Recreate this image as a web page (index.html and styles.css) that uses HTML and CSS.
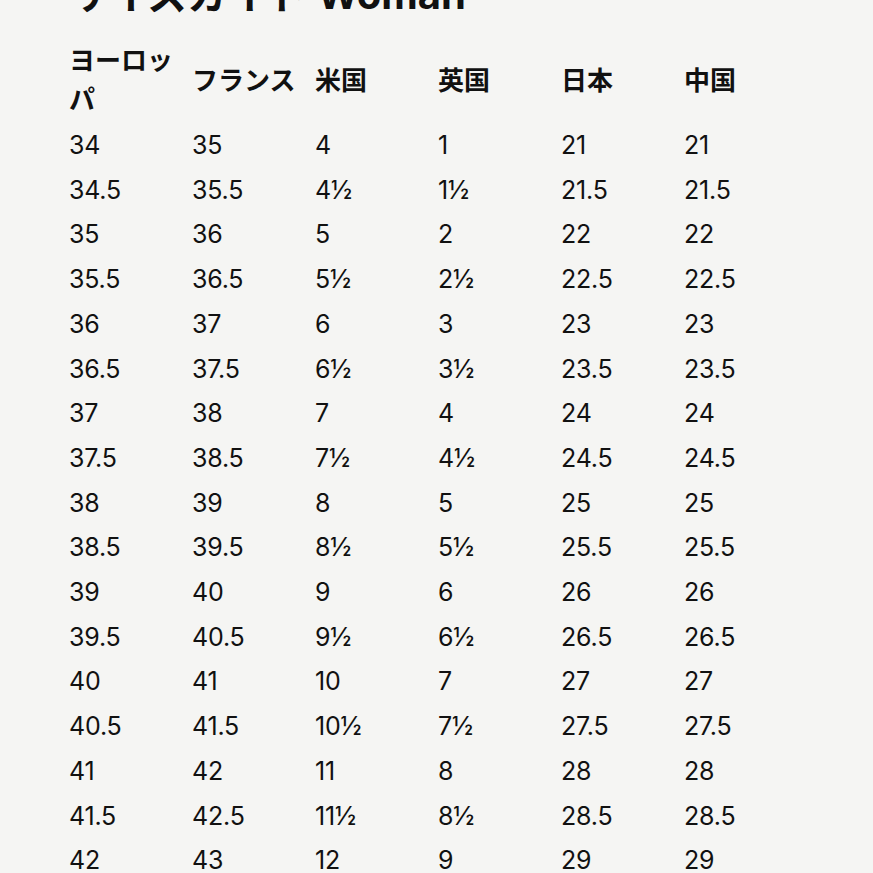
FILE: index.html
```html
<!DOCTYPE html>
<html lang="ja">
<head>
<meta charset="utf-8">
<title>サイズガイド Woman</title>
<link rel="stylesheet" href="styles.css">
</head>
<body>
<main class="page">
  <h1 class="title">サイズガイド Woman</h1>
  <table class="sizes">
    <colgroup><col><col><col><col><col><col></colgroup>
    <thead>
      <tr><th>ヨーロッパ</th><th>フランス</th><th>米国</th><th>英国</th><th>日本</th><th>中国</th></tr>
    </thead>
    <tbody>
      <tr><td>34</td><td>35</td><td>4</td><td>1</td><td>21</td><td>21</td></tr>
      <tr><td>34.5</td><td>35.5</td><td>4½</td><td>1½</td><td>21.5</td><td>21.5</td></tr>
      <tr><td>35</td><td>36</td><td>5</td><td>2</td><td>22</td><td>22</td></tr>
      <tr><td>35.5</td><td>36.5</td><td>5½</td><td>2½</td><td>22.5</td><td>22.5</td></tr>
      <tr><td>36</td><td>37</td><td>6</td><td>3</td><td>23</td><td>23</td></tr>
      <tr><td>36.5</td><td>37.5</td><td>6½</td><td>3½</td><td>23.5</td><td>23.5</td></tr>
      <tr><td>37</td><td>38</td><td>7</td><td>4</td><td>24</td><td>24</td></tr>
      <tr><td>37.5</td><td>38.5</td><td>7½</td><td>4½</td><td>24.5</td><td>24.5</td></tr>
      <tr><td>38</td><td>39</td><td>8</td><td>5</td><td>25</td><td>25</td></tr>
      <tr><td>38.5</td><td>39.5</td><td>8½</td><td>5½</td><td>25.5</td><td>25.5</td></tr>
      <tr><td>39</td><td>40</td><td>9</td><td>6</td><td>26</td><td>26</td></tr>
      <tr><td>39.5</td><td>40.5</td><td>9½</td><td>6½</td><td>26.5</td><td>26.5</td></tr>
      <tr><td>40</td><td>41</td><td>10</td><td>7</td><td>27</td><td>27</td></tr>
      <tr><td>40.5</td><td>41.5</td><td>10½</td><td>7½</td><td>27.5</td><td>27.5</td></tr>
      <tr><td>41</td><td>42</td><td>11</td><td>8</td><td>28</td><td>28</td></tr>
      <tr><td>41.5</td><td>42.5</td><td>11½</td><td>8½</td><td>28.5</td><td>28.5</td></tr>
      <tr><td>42</td><td>43</td><td>12</td><td>9</td><td>29</td><td>29</td></tr>
    </tbody>
  </table>
</main>
</body>
</html>
```
FILE: styles.css
```css
html, body {
  margin: 0;
  padding: 0;
  background: #f5f5f3;
}
body {
  color: #111111;
  font-family: Inter, "Noto Sans CJK JP", sans-serif;
  overflow: hidden;
}
.page {
  padding-left: 69px;
}
.title {
  margin: -29px 0 0 0;
  height: 48px;
  font-size: 40px;
  line-height: 48px;
  font-weight: 700;
  white-space: nowrap;
}
.sizes {
  margin-top: 14px;
  border-collapse: collapse;
  border-spacing: 0;
  table-layout: fixed;
  width: 738px;
}
.sizes col {
  width: 123px;
}
.sizes th {
  padding: 6px 0;
  text-align: left;
  vertical-align: middle;
  font-family: "Noto Sans CJK JP", sans-serif;
  font-size: 26px;
  font-weight: 700;
  line-height: 39px;
}
.sizes td {
  padding: 0;
  height: 44.7px;
  line-height: 44.7px;
  font-size: 25px;
  font-weight: 400;
  letter-spacing: -0.2px;
}
```
